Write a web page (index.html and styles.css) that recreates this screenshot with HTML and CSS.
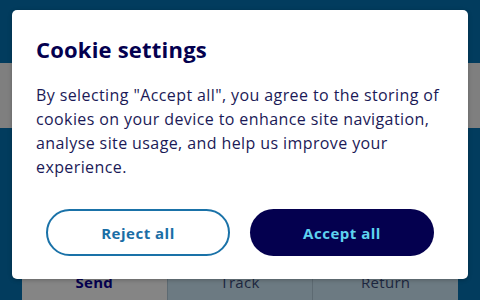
FILE: index.html
```html
<!DOCTYPE html>
<html lang="en">
<head>
<meta charset="utf-8">
<title>Cookie settings</title>
<link rel="stylesheet" href="styles.css">
</head>
<body>
<div class="page">
  <header class="top"></header>
  <div class="band"></div>
  <main class="main">
    <nav class="tabs">
      <div class="tab tab-active">Send</div>
      <div class="tab">Track</div>
      <div class="tab">Return</div>
    </nav>
  </main>
  <div class="modal" role="dialog" aria-labelledby="cookie-title">
    <h2 id="cookie-title" class="modal-title">Cookie settings</h2>
    <p class="modal-text">By selecting "Accept all", you agree to the storing of cookies on your device to enhance site navigation, analyse site usage, and help us improve your experience.</p>
    <div class="actions">
      <button class="btn btn-outline">Reject all</button>
      <button class="btn btn-solid">Accept all</button>
    </div>
  </div>
</div>
</body>
</html>
```
FILE: styles.css
```css
* { box-sizing: border-box; }
html, body { margin: 0; padding: 0; }
body {
  width: 480px;
  height: 300px;
  overflow: hidden;
  background: #023c5e;
  font-family: "Open Sans", "Liberation Sans", sans-serif;
}
.page {
  position: relative;
  width: 480px;
  height: 300px;
  display: flex;
  flex-direction: column;
}
.top { height: 63px; background: #023c5e; }
.band { height: 65px; background: #7f7f7f; }
.main {
  flex: 1;
  background: #023c5e;
  display: flex;
  flex-direction: column;
  justify-content: flex-end;
  padding: 0 22px;
}
.tabs {
  display: flex;
  height: 36px;
}
.tab {
  flex: 1;
  background: #6c7a82;
  color: #1d2740;
  font-size: 15px;
  letter-spacing: 0.3px;
  text-align: center;
  padding-top: 8px;
  border-left: 1px solid #5d6a72;
}
.tab:first-child { border-left: 0; }
.tab-active { background: #858585; color: #04004f; font-weight: 700; }

.modal {
  position: absolute;
  left: 12px;
  top: 10px;
  width: 456px;
  height: 269px;
  background: #ffffff;
  border-radius: 5px;
  padding: 24px 24px 23px;
  box-shadow: 0 1px 4px rgba(0,0,0,0.25);
  display: flex;
  flex-direction: column;
}
.modal-title {
  margin: 0;
  font-size: 22px;
  line-height: 30px;
  font-weight: 700;
  letter-spacing: 0.2px;
  color: #04004f;
}
.modal-text {
  margin: 19px 0 0;
  font-size: 16px;
  line-height: 24px;
  letter-spacing: 0.4px;
  color: #1b1a57;
}
.actions {
  margin-top: auto;
  display: flex;
  justify-content: center;
  gap: 20px;
}
.btn {
  width: 184px;
  height: 47px;
  border-radius: 24px;
  font-family: inherit;
  font-size: 15px;
  font-weight: 700;
  letter-spacing: 0.5px;
  cursor: pointer;
}
.btn-outline {
  background: #ffffff;
  border: 2px solid #1a72a8;
  color: #1a6ea6;
}
.btn-solid {
  background: #04004f;
  border: 0;
  color: #5fd3ef;
}
```
